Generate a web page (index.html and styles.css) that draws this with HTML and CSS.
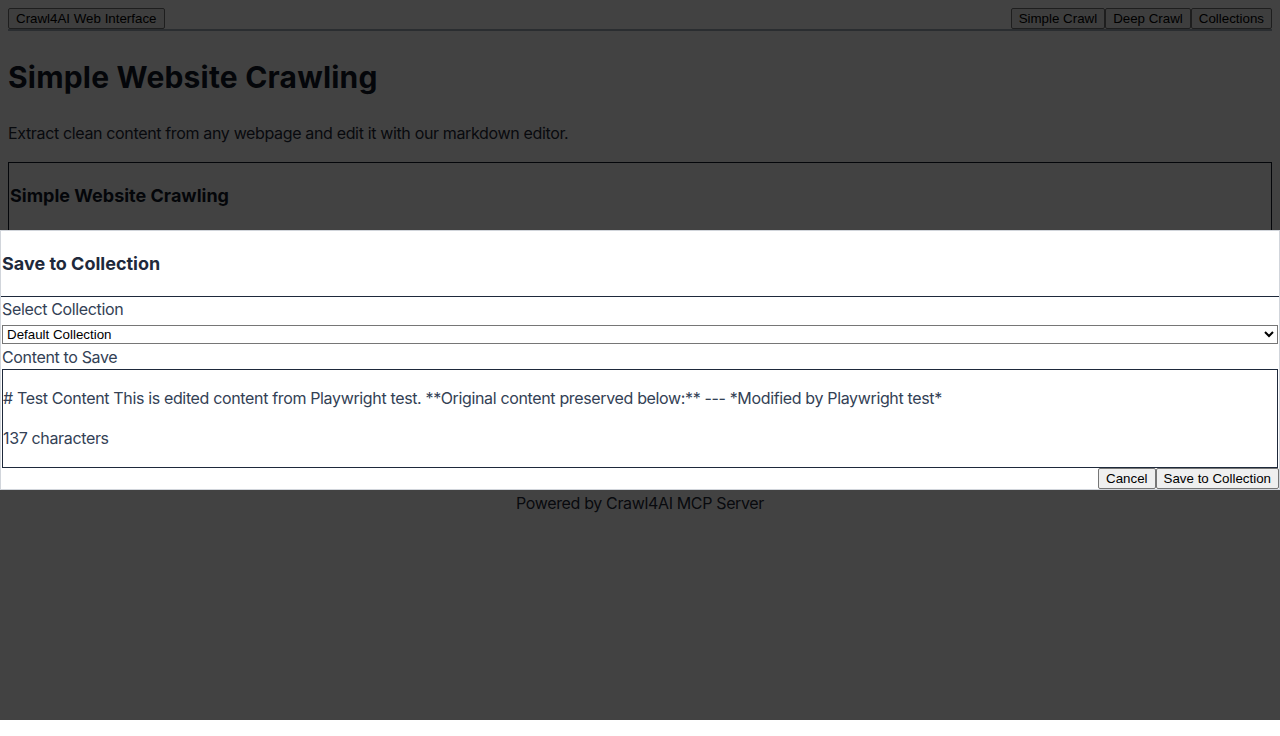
FILE: index.html
```html
<!DOCTYPE html>
<html>
<head>
<meta charset="utf-8">
<title>Crawl4AI Web Interface</title>
<link rel="stylesheet" href="styles.css">
</head>
<body>
<nav class="topnav">
  <button class="btn">Crawl4AI Web Interface</button>
  <div class="navlinks">
    <button class="btn">Simple Crawl</button>
    <button class="btn">Deep Crawl</button>
    <button class="btn">Collections</button>
  </div>
</nav>
<main class="main">
  <h1 class="title">Simple Website Crawling</h1>
  <p class="lead">Extract clean content from any webpage and edit it with our markdown editor.</p>
  <section class="card">
    <h3 class="card-title">Simple Website Crawling</h3>
  </section>
</main>
<footer class="footer">Powered by Crawl4AI MCP Server</footer>

<div class="overlay">
  <div class="modal">
    <div class="modal-head">
      <h3 class="modal-title">Save to Collection</h3>
    </div>
    <label class="field-label">Select Collection</label>
    <select class="select">
      <option>Default Collection</option>
    </select>
    <label class="field-label">Content to Save</label>
    <div class="content-box">
      <p class="content-text"># Test Content This is edited content from Playwright test. **Original content preserved below:** --- *Modified by Playwright test*</p>
      <p class="content-text">137 characters</p>
    </div>
    <div class="actions">
      <button class="btn">Cancel</button>
      <button class="btn">Save to Collection</button>
    </div>
  </div>
</div>
</body>
</html>
```

FILE: styles.css
```css
html, body {
  background: #ffffff;
}
body {
  margin: 8px;
  font-family: Inter, "Noto Sans", sans-serif;
  font-size: 16px;
  line-height: 1.5;
  letter-spacing: -0.35px;
  color: #1f2937;
}
.btn {
  font-family: "Liberation Sans", Arial, sans-serif;
  font-size: 13.33px;
  line-height: normal;
  letter-spacing: normal;
  padding: 2px 7px;
  margin: 0;
  border: 1px solid #767676;
  border-radius: 2px;
  background: #efefef;
  color: #000;
}
.topnav {
  display: flex;
  justify-content: space-between;
  align-items: flex-start;
  border-bottom: 2px solid #a3acb9;
}
.navlinks {
  display: flex;
}
.title {
  font-size: 30px;
  line-height: 48px;
  font-weight: 700;
  letter-spacing: 0.2px;
  color: #111827;
  margin: 22px 0 20px;
}
.lead {
  margin: 16px 0 17px;
  color: #1f2937;
}
.card {
  border: 1px solid #111827;
  height: 319px;
  padding: 0 1px;
}
.card-title {
  font-size: 18px;
  line-height: 28px;
  font-weight: 700;
  letter-spacing: 0;
  color: #111827;
  margin: 19px 0 18px;
}
.footer {
  text-align: center;
  color: #1f2937;
  margin-top: 8px;
  height: 200px;
}
.overlay {
  position: absolute;
  top: 0;
  left: 0;
  width: 100%;
  height: 720px;
  background: rgba(0, 0, 0, 0.74);
  display: flex;
  align-items: center;
}
.modal {
  width: 100%;
  background: #ffffff;
  border: 1px solid #d1d5db;
  box-sizing: border-box;
  color: #334155;
}
.modal-head {
  border-bottom: 1px solid #1e293b;
  padding-top: 1px;
}
.modal-title {
  font-size: 18px;
  line-height: 28px;
  font-weight: 700;
  letter-spacing: 0;
  color: #1e293b;
  margin: 18px 1px 18px;
}
.field-label {
  display: block;
  color: #334155;
  padding-left: 1px;
}
.select {
  display: block;
  width: calc(100% - 2px);
  margin: 4px 1px 1px;
  font-family: "Liberation Sans", Arial, sans-serif;
  font-size: 13.33px;
  letter-spacing: normal;
  height: 19px;
  padding: 0;
  border: 1px solid #767676;
  border-radius: 0;
  background: #fff;
  color: #000;
}
.content-box {
  border: 1px solid #1e293b;
  margin: 0 1px;
  padding-bottom: 1px;
}
.content-text {
  margin: 16px 0;
  color: #334155;
}
.actions {
  display: flex;
  justify-content: flex-end;
  padding-right: 0;
}
```
